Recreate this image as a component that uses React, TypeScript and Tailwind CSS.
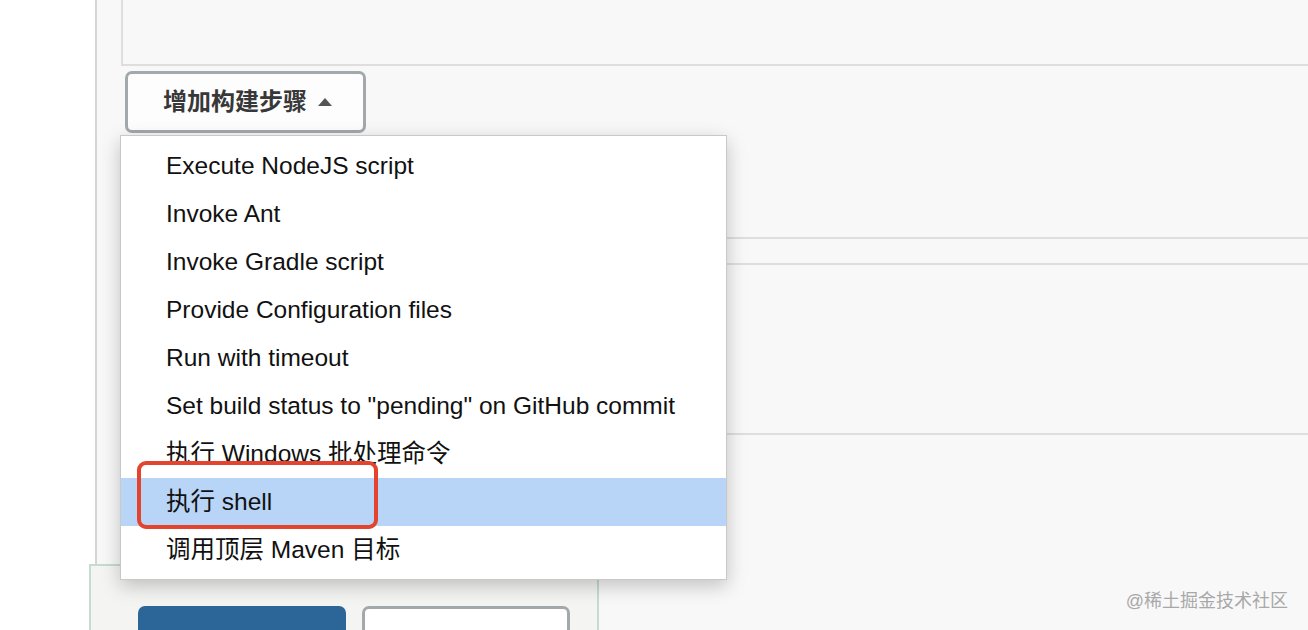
import React from 'react'

const steps = [
  'Execute NodeJS script',
  'Invoke Ant',
  'Invoke Gradle script',
  'Provide Configuration files',
  'Run with timeout',
  'Set build status to "pending" on GitHub commit',
  '执行 Windows 批处理命令',
  '执行 shell',
  '调用顶层 Maven 目标',
]

const font = { fontFamily: '"Liberation Sans", "Noto Sans CJK SC", sans-serif' }

export default function App() {
  const active = 7

  return (
    <div className="relative h-[630px] w-full overflow-hidden bg-white" style={font}>
      {/* upper part of the config page */}
      <div className="flex h-[564px]">
        <div className="w-[97px] shrink-0 bg-white border-r-2 border-[#d3d6d4]" />
        <div className="flex-1 bg-[#f8f8f8] pl-[24px]">
          <div className="h-[66px] border-l-2 border-b-2 border-[#dedede] bg-[#f8f8f8]" />
          <div className="pt-[5px] pl-[4px]">
            <button className="flex items-center h-[62px] w-[241px] pl-[35px] gap-[11px] rounded-[7px] border-[3px] border-[#a2a9ac] bg-[#fdfdfd] text-[24px] font-bold text-[#383838]">
              增加构建步骤
              <svg width="14" height="8" viewBox="0 0 14 8">
                <path d="M0 8 L7 0 L14 8 Z" fill="#555" />
              </svg>
            </button>
          </div>
          <div className="h-[106px] border-b-2 border-[#dedede]" />
          <div className="h-[26px] border-b-2 border-[#dedede]" />
          <div className="h-[170px] border-b-2 border-[#dedede]" />
        </div>
      </div>

      {/* bottom form actions */}
      <div className="flex">
        <div className="ml-[89px] w-[510px] h-[66px] border-l-2 border-t-2 border-r-2 border-[#c6dccf] bg-[#f4f5f3] pl-[47px] pt-[40px] flex gap-[16px]">
          <div className="w-[208px] h-[40px] rounded-t-[7px] bg-[#2c6699]" />
          <div className="w-[208px] h-[40px] rounded-t-[7px] border-[3px] border-b-0 border-[#a3a9ab] bg-white" />
        </div>
        <div className="flex-1 bg-[#f8f8f8]" />
      </div>

      {/* dropdown menu */}
      <div className="absolute left-[120px] top-[135px] w-[607px] h-[445px] bg-white border border-[#c9c9c9] shadow-[0_6px_18px_rgba(0,0,0,0.22)] pt-[6px]">
        {steps.map((s, i) => (
          <div
            key={s}
            className={`h-[48px] leading-[48px] pl-[45px] text-[24.5px] text-[#111] whitespace-nowrap ${i === active ? 'bg-[#b8d4f7]' : ''}`}
          >
            {s}
          </div>
        ))}
      </div>

      {/* highlight annotation */}
      <div className="absolute left-[137px] top-[461px] w-[241px] h-[68px] rounded-[9px] border-[4px] border-[#e4432d]" />

      <div className="absolute right-[20px] top-[588px] text-[18px] text-[#a8a8a8]">@稀土掘金技术社区</div>
    </div>
  )
}
